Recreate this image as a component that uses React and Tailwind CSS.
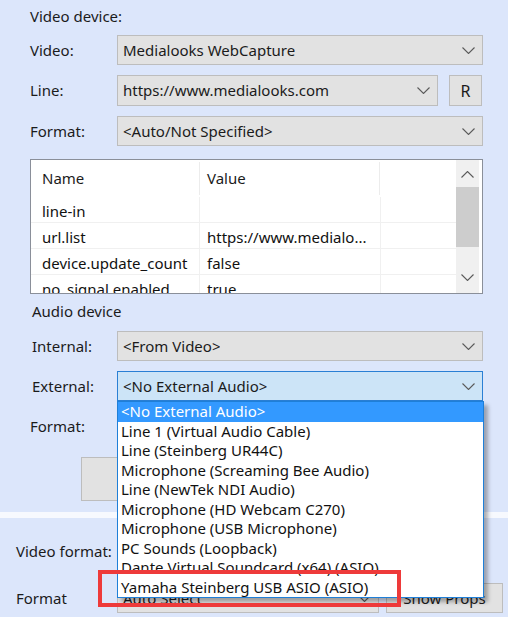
import React from 'react';

const audioItems = [
  '<No External Audio>',
  'Line 1 (Virtual Audio Cable)',
  'Line (Steinberg UR44C)',
  'Microphone (Screaming Bee Audio)',
  'Line (NewTek NDI Audio)',
  'Microphone (HD Webcam C270)',
  'Microphone (USB Microphone)',
  'PC Sounds (Loopback)',
  'Dante Virtual Soundcard (x64) (ASIO)',
  'Yamaha Steinberg USB ASIO (ASIO)',
];

const props = [
  { name: 'line-in', value: '' },
  { name: 'url.list', value: 'https://www.medialo...' },
  { name: 'device.update_count', value: 'false' },
  { name: 'no_signal.enabled', value: 'true' },
];

const Chevron = ({ up = false }) => (
  <svg width="13" height="7" viewBox="0 0 13 7" className="shrink-0">
    <path
      d={up ? 'M0.5 6.5l6-6 6 6' : 'M0.5 0.5l6 6 6-6'}
      fill="none"
      stroke="#5a5a5a"
      strokeWidth="1.1"
    />
  </svg>
);

const Combo = ({ value = '', focused, className = '' }) => (
  <div
    className={`flex h-[30px] items-center justify-between border pl-[5px] pr-[7px] ${
      focused ? 'border-[#2a7fd4] bg-[#cce4f7]' : 'border-[#bdbdbd] bg-[#e2e2e2]'
    } ${className}`}
  >
    <span className="truncate whitespace-nowrap">{value}</span>
    <Chevron />
  </div>
);

const Row = ({ label, labelWidth = 'w-[87px]', className = '', children }) => (
  <div className={`flex items-center ${className}`}>
    <div className={`${labelWidth} shrink-0`}>{label}</div>
    {children}
  </div>
);

const PropTable = () => (
  <div className="mt-[13px] flex h-[135px] overflow-hidden border border-[#8a8f99] bg-white">
    <div className="flex-1 overflow-hidden">
      <div className="flex h-[37px]">
        <div className="my-[2px] flex w-[169px] items-center border-r border-[#ececec] pl-[11px]">Name</div>
        <div className="my-[2px] flex w-[180px] items-center border-r border-[#ececec] pl-[7px]">Value</div>
      </div>
      {props.map((p) => (
        <div key={p.name} className="flex h-[26px] border-b border-[#f0f0f0] text-[#111]">
          <div className="w-[169px] truncate border-r border-[#f0f0f0] pl-[11px] pt-[3px] leading-[22px]">{p.name}</div>
          <div className="w-[181px] truncate border-r border-[#f0f0f0] pl-[7px] pt-[3px] leading-[22px]">{p.value}</div>
        </div>
      ))}
    </div>
    <div className="mr-[3px] flex w-[23px] flex-col bg-[#f0f0f0]">
      <div className="flex h-[27px] items-center justify-center pt-[2px]">
        <Chevron up />
      </div>
      <div className="h-[60px] bg-[#cdcdcd]" />
      <div className="flex flex-1 items-end justify-center pb-[12px]">
        <Chevron />
      </div>
    </div>
  </div>
);

export default function App() {
  return (
    <div className="relative h-[617px] w-[508px] overflow-hidden bg-[#dce6fb] font-['Noto_Sans',sans-serif] text-[15px] text-[#1b1b1b]">
      <div className="pl-[30px] pr-[25px]">
        <div className="h-[35px] pt-[3px] leading-[26px]">Video device:</div>
        <Row label="Video:">
          <Combo value="Medialooks WebCapture" className="flex-1" />
        </Row>
        <Row label="Line:" className="mt-[10px]">
          <Combo value="https://www.medialooks.com" className="h-[31px] w-[321px]" />
          <button className="ml-[11px] h-[31px] w-[33px] border border-[#bdbdbd] bg-[#e2e2e2] text-[16px]">R</button>
        </Row>
        <Row label="Format:" className="mt-[10px]">
          <Combo value="<Auto/Not Specified>" className="flex-1" />
        </Row>

        <PropTable />

        <div className="h-[34px] pl-[2px] leading-[34px]">Audio device</div>
        <Row label={<span className="pl-[2px]">Internal:</span>} className="mt-[3px]">
          <Combo value="<From Video>" className="flex-1" />
        </Row>
        <Row label={<span className="pl-[2px]">External:</span>} className="mt-[10px]">
          <Combo value="<No External Audio>" focused className="flex-1" />
        </Row>
        <Row label="Format:" className="mt-[10px]">
          <Combo className="flex-1" />
        </Row>
        <div className="mt-[16px] flex pl-[51px]">
          <button className="block h-[44px] w-[170px] border border-[#bdbdbd] bg-[#e2e2e2]" />
        </div>
      </div>

      <div className="mt-[11px] h-[6px] bg-[#f7f9fe]" />

      <div className="pl-[16px]">
        <Row label="Video format:" labelWidth="w-[101px]" className="mt-[18px]">
          <Combo className="w-[262px]" />
        </Row>
        <Row label="Format" labelWidth="w-[101px]" className="mt-[17px]">
          <Combo value="Auto Select" className="w-[262px]" />
          <button className="ml-[7px] h-[30px] w-[117px] border border-[#bdbdbd] bg-[#e2e2e2]">Show Props</button>
        </Row>
      </div>

      {/* open list of the External combo */}
      <div className="absolute left-[117px] top-[401px] w-[367px] border border-[#1e7fd8] bg-white shadow-[4px_4px_4px_rgba(0,0,0,0.3)]">
        {audioItems.map((item, i) => (
          <div
            key={item}
            className={`h-[19.5px] whitespace-nowrap pl-[3px] leading-[19.5px] ${
              i === 0 ? 'bg-[#3399ff] text-white' : 'text-[#111]'
            }`}
          >
            {item}
          </div>
        ))}
      </div>

      {/* annotation */}
      <div className="absolute left-[98px] top-[570px] h-[37px] w-[303px] border-[4px] border-[#ee3a3a]" />
    </div>
  );
}
